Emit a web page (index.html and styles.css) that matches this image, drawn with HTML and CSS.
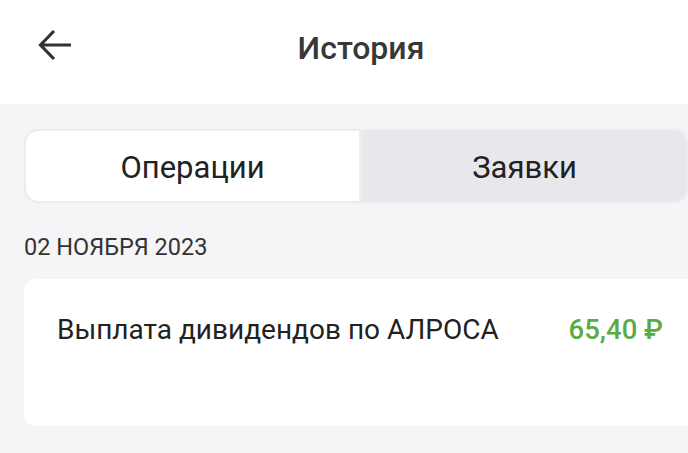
FILE: index.html
```html
<!DOCTYPE html>
<html lang="ru">
<head>
<meta charset="utf-8">
<link rel="stylesheet" href="styles.css">
</head>
<body>
<div class="screen">
  <header class="topbar">
    <button class="back" aria-label="Назад">
      <svg width="36" height="36" viewBox="0 0 36 36"><path d="M34 18H4M17 4L3.5 18L17 32" fill="none" stroke="#333" stroke-width="3.2"/></svg>
    </button>
    <h1 class="title">История</h1>
  </header>
  <main class="content">
    <div class="tabs">
      <div class="tab active">Операции</div>
      <div class="tab">Заявки</div>
    </div>
    <div class="date">02 НОЯБРЯ 2023</div>
    <div class="card">
      <div class="row">
        <span class="name">Выплата дивидендов по АЛРОСА</span>
        <span class="amount">65,40 ₽</span>
      </div>
    </div>
  </main>
</div>
</body>
</html>
```
FILE: styles.css
```css
* { box-sizing: border-box; }
html, body { margin: 0; padding: 0; }
body {
  width: 688px;
  height: 453px;
  overflow: hidden;
  background: #f5f5f7;
  font-family: Roboto, "Noto Sans", sans-serif;
  color: #333;
}
.screen { width: 688px; }
.topbar {
  position: relative;
  height: 104px;
  background: #fff;
  display: flex;
  align-items: center;
  justify-content: center;
}
.back {
  position: absolute;
  left: 37px;
  top: 27px;
  width: 36px;
  height: 36px;
  padding: 0;
  border: 0;
  background: none;
}
.back svg { display: block; }
.title {
  margin: 0 0 8px 34px;
  font-size: 32px;
  font-weight: 500;
  color: #383838;
  letter-spacing: 0;
}
.content {
  padding: 25px 0 0 24px;
}
.tabs {
  width: 664px;
  height: 74px;
  display: flex;
  background: #e8e8ec;
  border: 2px solid #ececef;
  border-radius: 14px;
  overflow: hidden;
}
.tab {
  flex: 1;
  display: flex;
  align-items: center;
  justify-content: center;
  font-size: 31px;
  color: #222;
  padding-top: 2px;
}
.tab.active {
  flex: 0 0 337px;
  background: #fff;
  border-right: 4px solid #ececef;
  border-radius: 12px 0 0 12px;
}
.date {
  margin-top: 30px;
  font-size: 23.5px;
  line-height: 28px;
  color: #333;
}
.card {
  margin-top: 18px;
  width: 690px;
  height: 147px;
  background: #fff;
  border-radius: 12px;
  padding: 34px 0 0 33px;
}
.row {
  display: flex;
  align-items: center;
  width: 606px;
  justify-content: space-between;
}
.name {
  font-size: 28px;
  color: #222;
}
.amount {
  font-size: 27.5px;
  font-weight: 500;
  color: #5aaa46;
}
```
